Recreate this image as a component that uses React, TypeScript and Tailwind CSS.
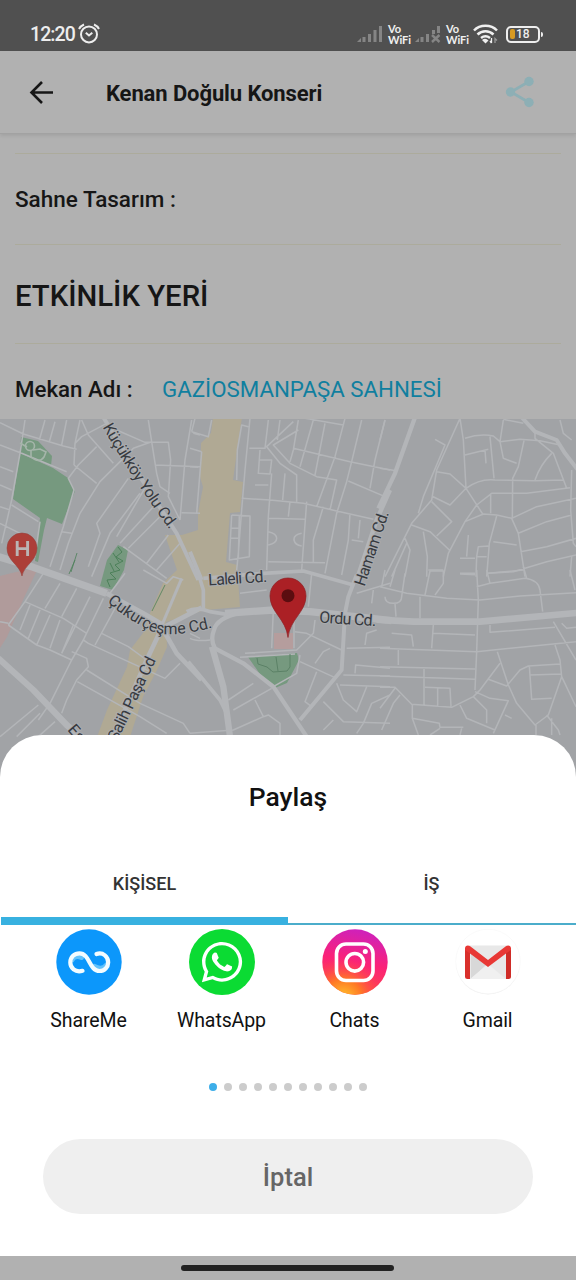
import React from "react";
import { FaWhatsapp } from "react-icons/fa";

type Tile = { x: number; y: number; thin: string; wide: { d: string; w: number }[] };

// Street geometry, grouped by map tile; tile units are a third of a pixel.
const tiles: Tile[] = [
  {
    x: 0, y: 410,
    thin: "M0 38L70 72L190 108L230 118M0 105L65 130L200 185M75 30L60 130L35 270L5 400M135 30L118 90M165 35L148 95M200 30L185 105M240 30L225 100L222 165M225 100L245 80L320 40M245 30L265 75L340 160M222 165L290 220M290 110L235 165L205 205L222 240L190 350L150 470M455 95L400 115L300 215L240 310L205 400L180 480M350 60L435 97L505 97L512 150L505 260L540 330M445 30L455 95L470 190L480 230L510 250M465 165L600 170M575 30L555 150L540 330M600 310L545 308M580 70L600 75M385 205L290 340L300 370L265 470M440 225L350 380M465 285L360 400M490 310L385 415M420 250L330 370L275 500M0 170L40 185M0 225L35 240M35 285L115 335M0 290L30 300M120 335L105 440M0 340L60 370M185 365L215 370M505 375L440 460M540 400L470 480M370 410L500 505",
    wide: [{ d: "M310 22L420 200L530 370L595 510", w: 12 }],
  },
  {
    x: 190, y: 410,
    thin: "M180 25L165 180L155 300L145 430L140 480M0 115L35 125M0 170L25 172M35 125L20 310M5 65L55 80L65 30M5 65L15 25M140 210L142 120L155 45L175 50M235 30L225 115L178 115M310 35L230 110L270 160L320 195L320 275M325 60L250 105L300 160L380 200L440 210L420 300M270 30L262 90M325 30L310 120L300 155M370 30L330 170M405 40L375 195M345 25L460 45M310 115L480 155L600 180M350 275L335 480M465 25L435 140L380 290M515 30L485 155L470 215L440 310L405 490M585 30L555 150L540 235M155 265L240 270L340 280L450 305L550 328M475 213L585 260M400 290L370 390L370 455M210 120L205 190L240 192L245 150L210 150M245 190L235 320L230 480M285 190L278 270M195 225L235 225M235 325L345 328M300 275L295 320M235 455L405 458M235 365Q260 370 260 385Q260 400 235 405M335 370Q310 375 312 390Q315 405 335 408M125 315L180 318L178 440L118 450L125 315M122 355L150 355M120 385L148 385M148 318L145 445M480 310L475 390L455 495M510 330L505 385M485 390L520 395",
    wide: [{ d: "M600 240L560 330L500 510", w: 13 }, { d: "M0 425L35 510", w: 12 }],
  },
  {
    x: 380, y: 410,
    thin: "M15 30L0 90M0 175L50 182M240 25L170 180L155 270L95 340L15 500M165 88L195 105L130 260L115 310M240 25L250 90L258 235L310 315M255 85Q300 70 340 78L360 95L420 88L480 92L540 105M255 135L325 118M315 120L318 160M330 80L342 205M370 30L360 95L370 145L410 160M370 28L430 40M432 92L415 170L398 205L397 325M258 235Q300 205 345 210L465 212L550 210M465 210Q480 165 515 130M465 65L465 85L520 130L560 235M170 185L210 192L258 235L210 285L155 258M155 275L215 335L170 378M95 345L150 365L208 420M130 365L142 440L140 500M570 233L440 250L335 250L290 285L255 335L205 430L190 500M332 250L332 310M255 335L310 312L350 315L395 325L470 290L588 265M350 318L328 400L320 500M395 325L415 370L435 500M415 370L500 335L575 315M422 425L500 410L588 385M322 490L400 485L500 455L588 435M288 500L290 440L295 410L325 408M290 440L320 440M265 375L260 440M240 445L285 445M240 490L285 490M340 395L410 405M575 180L572 300L580 400L588 410M575 440L570 500M540 30L550 70L575 90M75 385L90 420L75 500M80 400L35 500M145 480L190 480",
    wide: [{ d: "M105 22L45 190L-5 295", w: 13 }, { d: "M425 22L465 65L530 90L555 130L592 178", w: 12 }],
  },
  {
    x: 0, y: 570,
    thin: "M130 10L75 95L25 165M75 95L190 145L260 190M25 165L110 225L150 240L215 270M180 40L135 115M230 55L185 140M90 105L60 180M120 120L85 205M150 135L110 225M180 150L150 235M220 165L185 250M270 80L185 250M310 85L250 210L215 270L150 400L115 450M250 210L265 220L495 325L540 280M215 245L260 265L265 290L230 330L200 390L185 430M260 300L420 400L550 460L570 490M232 335L420 440L500 490M305 190L385 230L440 270M345 115L285 225M330 70L375 10M430 0L500 40L520 20L550 30M0 500L115 405M50 500L120 430M115 500L165 455M0 155L25 160M570 190L600 205",
    wide: [
      { d: "M-5 -40L100 -8L320 70", w: 22 }, { d: "M320 70L430 130L490 165", w: 14 },
      { d: "M545 25L488 160", w: 9 }, { d: "M605 113L485 175L440 270L340 500", w: 14 },
      { d: "M490 180L530 250L605 330", w: 14 }, { d: "M-5 265L100 360L200 465L240 500", w: 19 },
    ],
  },
  {
    x: 190, y: 570,
    thin: "M365 10L355 110M250 120L245 235M312 130L312 235M165 250L320 240L370 190L375 150M150 262L315 252M315 185L350 190L455 240M330 255L320 310L250 350M330 275L440 325M380 305L345 395L365 410M375 280L400 245L420 235M440 340L460 390L500 425L530 350M400 395L460 455L600 460M400 480L430 450M600 375L545 400L520 460L500 490M115 390L190 340M130 420L245 355M195 390L220 440L130 480L0 490M220 440L235 435L270 460L270 495M495 310L497 285L600 295M460 315L600 318M450 345L600 350M470 235L600 232M500 70L600 40M550 60L545 100M525 225L530 190L560 180M0 205Q20 215 60 210M150 70L230 60",
    wide: [
      { d: "M20 -5L40 60L40 115", w: 11 }, { d: "M-10 125Q20 108 60 125L110 133", w: 11 },
      { d: "M105 130L250 120L360 125L605 152", w: 22 },
      { d: "M150 128Q80 145 72 180Q60 210 75 235L160 280L250 350L350 500", w: 13 },
      { d: "M66 230L100 350L120 500", w: 19 }, { d: "M-5 275L90 390L110 430", w: 11 },
      { d: "M40 25L220 10L340 3L490 45", w: 11 }, { d: "M500 15L475 80L465 130L455 300L330 450", w: 12 },
    ],
  },
  {
    x: 380, y: 570,
    thin: "M0 50L80 70L200 85L300 90L420 78L588 68M290 0L295 90L290 245L285 360M120 80L120 145M45 100L48 140M15 80Q15 100 40 100Q65 100 65 80L75 10M5 50L15 0M30 50L45 0M135 75L150 3L190 3L190 40L165 75M320 0L330 40L290 50M330 40L435 25Q475 30 480 60L488 125M430 -10L440 25M240 12L285 14M325 10L430 0M570 0L585 60M160 165L155 235M160 190L285 195M35 190L95 195L100 230M330 165L330 187L525 172M0 235L290 245L588 215M55 240L55 285M520 155L588 270M545 160L560 175L588 172M0 290L285 297M0 318L285 328M132 292L132 405M0 352L45 352L95 403L215 412L280 380L300 360L360 280M135 352L210 355L213 410M173 355L173 410M0 415L45 355M5 480L40 400L60 375M352 245L385 345L410 400L465 465L505 435L545 320L540 270L525 225M325 328L380 348L420 300L445 288L540 282M448 288L455 388L515 385M450 315L545 312M545 320L588 410M285 365L330 385L385 392L340 490M280 380L320 420L320 460M240 405L260 445L345 480M375 435L395 445M97 405L97 445L178 460L180 472L250 472M115 495L97 445M150 495L180 475M245 475L240 495M500 435L535 480L540 495M515 445L515 495M468 465L468 495",
    wide: [{ d: "M-10 149L100 155L300 155L600 128", w: 20 }],
  },
];

const labels = [
  { id: "kucukkoy", d: "M102.500 427Q132 479 175 537", t: "Küçükköy Yolu Cd.", l: 123 },
  { id: "hamam", d: "M364.5 587L390 510", t: "Hamam Cd.", l: 78 },
  { id: "laleli", d: "M208.500 585.5L280 581", t: "Laleli Cd.", l: 59 },
  { id: "ordu", d: "M319 622.5L390 627", t: "Ordu Cd.", l: 57 },
  { id: "cukurcesme", d: "M107 602Q128 620 151 631Q173 640 225 624", t: "Çukurçeşme Cd.", l: 116 },
  { id: "salih", d: "M117 742L160 652", t: "Salih Paşa Cd", l: 91 },
  { id: "eski", d: "M67 730L100 768", t: "Eski", l: 30 },
];

function StreetMap() {
  return (
    <svg className="block h-[361px] w-full shrink-0" viewBox="0 419 576 361">
      <rect x="0" y="419" width="576" height="361" fill="#a1a3a6" />
      <path d="M213 418L242 418L240 430L233 480L243 482L240 512L230 513L226 562L237 565L240 607L205 610L166 622L167 647L157 670L143 697L130 737L97 737L107 710L127 667L130 650L143 633L150 613L163 583L177 570L165 535L182 535L198 530L198 513L203 487L200 477L201 443L211 433Z" fill="#b0a994" />
      <path d="M0 576L16 572L38 568L23 600L7 637L0 648Z" fill="#b09b9b" />
      <path d="M274 633H293V649H274Z" fill="#b59d9d" />
      <g fill="#76997f">
        <path d="M20 453L53 468L68 478L75 491L62 524L47 518L44 530L38 562L35 561L40 518L13 499Z" />
        <path d="M21 437L38 441L52 456L51 466L20 453Z" />
        <path d="M248 657L297 653L299 660L287 683L275 688L262 677Z" />
      </g>
      <path d="M118 545L128 550L124 570L113 590L100 586L107 560Z" fill="#76997f" />
      {tiles.map((tile) => (
        <g key={`${tile.x}-${tile.y}`} transform={`translate(${tile.x} ${tile.y}) scale(.33333)`} fill="none" stroke="#b3b5b8" strokeLinejoin="round">
          <path d={tile.thin} strokeWidth="4.6" />
          {tile.wide.map((road) => <path key={road.d} d={road.d} strokeWidth={road.w} />)}
        </g>
      ))}
      <g fill="none" stroke="#4c8059" strokeWidth="1">
        <path d="M118 547L122 552L116 557L123 561L115 565L120 570L110 573L116 579L107 580L110 587M113 553L119 562M110 563L114 571" />
        <path d="M257 658L258 664L267 667L273 672L287 671L290 667V654M276 657L278 671" stroke="#5b8166" />
        <path d="M77 553L71 572M165 585L152 611M75 560L69 574" strokeWidth=".8" />
      </g>
      <g fill="none" stroke="#a5b5aa" strokeWidth="1.6">
        <circle cx="30" cy="446" r="4.5" />
        <path d="M20 443L27 447M31 451L31 457Q39 464 44 457L46 452L40 449L33 450" />
      </g>
      <path d="M0 666L36 700" stroke="#a2a4a7" strokeWidth="1" />
      <g fontFamily="Roboto, sans-serif" fontSize="16" fill="#373a3f" stroke="#aaacaf" strokeWidth="2" paintOrder="stroke">
        {labels.map((label) => (
          <React.Fragment key={label.id}>
            <path id={label.id} d={label.d} fill="none" stroke="none" />
            <text textLength={label.l}><textPath href={`#${label.id}`} textLength={label.l}>{label.t}</textPath></text>
          </React.Fragment>
        ))}
      </g>
      <path d="M22 576C20 565 7 561 7 548A15 15 0 0 1 37 548C37 561 24 565 22 576Z" fill="#ac3f38" stroke="#95413c" strokeWidth=".6" />
      <path d="M17.2 541V556M27.6 541V556M17.2 548.6H27.6" stroke="#bab5b4" strokeWidth="2.9" />
      <path d="M288 637.5C286 619 270 612 270 596A18 18 0 0 1 306 596C306 612 290 619 288 637.5Z" fill="#ab2025" stroke="#8e2024" strokeWidth=".7" />
      <circle cx="288" cy="595.7" r="6.5" fill="#5b0d10" />
    </svg>
  );
}

function Signal({ off = false }: { off?: boolean }) {
  return (
    <svg className="h-[17px] w-[26px]" viewBox="0 0 26 17" fill="#858585">
      <path d="M0 16L4 12V16ZM5.5 11H8.5V16H5.5ZM11 8H14V16H11Z" />
      {off ? (
        <>
          <path d="M17 4H20V8H17ZM22 0H25V7H22Z" />
          <path d="M17 9L24.5 16M24.5 9L17 16" stroke="#858585" strokeWidth="2.4" />
        </>
      ) : (
        <path d="M16.5 4H19.5V16H16.5ZM22 0H25V16H22Z" />
      )}
    </svg>
  );
}

function VoWifi() {
  return (
    <div className="flex w-[23px] flex-col font-[Lato,sans-serif] text-[11px] leading-[11px] font-bold tracking-[-0.1px] text-[#f0f0f0]">
      <span>Vo</span>
      <span>WiFi</span>
    </div>
  );
}

function StatusBar() {
  return (
    <div className="flex h-[51px] shrink-0 items-start justify-between bg-[#505050] pr-[33px] pl-[30px]">
      <div className="flex pt-[23px]">
        <span className="w-[48px] text-[19.5px] leading-[23px] font-medium tracking-[-0.9px] whitespace-nowrap text-[#ededed]">12:20</span>
        <svg className="h-[21px] w-[22px]" viewBox="0 0 22 21" fill="none" stroke="#ededed" strokeWidth="2">
          <circle cx="11" cy="11.4" r="8" />
          <path d="M1 6Q2.5 3 6 1.5M21 6Q19.500 3 16 1.500" />
          <path d="M7.800 9.800L11 12.500L14.300 9.800" />
        </svg>
      </div>
      <div className="flex items-center pt-[23px]">
        <Signal />
        <div className="w-[5px]" />
        <VoWifi />
        <div className="w-[4px]" />
        <Signal off />
        <div className="w-[5px]" />
        <VoWifi />
        <svg className="ml-[4px] h-[20px] w-[25px]" viewBox="0 0 25 20" fill="none" stroke="#f0f0f0" strokeWidth="2.500">
          <path d="M1 6.500C7 .3 18 .3 24 6.500M4.500 10.500C9 6 16 6 20.500 10.500M8 14Q12.500 10.500 17 14" />
          <path d="M9 16L12.500 19.500L15.500 16.500Q12.500 13.500 9 16Z" fill="#f0f0f0" stroke="none" />
          <path d="M18.500 14V19M17 17L18.500 19" strokeWidth="1.300" />
          <path d="M22 19V14.500L24 16.500" stroke="#999" strokeWidth="1.300" />
        </svg>
        <div className="ml-[8px] flex h-[17px] w-[34px] items-center rounded-[5px] border-2 border-[#eeeeee] pl-[2px]">
          <div className="h-[10px] w-[5px] rounded-[2px] bg-[#d79b22]" />
          <span className="ml-[1px] text-[12px] leading-none font-medium text-[#eeeeee]">18</span>
        </div>
        <div className="ml-px h-[5px] w-[2px] rounded-r bg-[#eeeeee]" />
      </div>
    </div>
  );
}

function ShareMeIcon() {
  return (
    <svg className="size-[66px]" viewBox="0 0 66 66">
      <circle cx="33" cy="33" r="32.700" fill="#0c97fb" />
      <g fill="none" strokeLinecap="round" strokeWidth="4.200">
        <path d="M16 31Q18.500 25.500 25.500 28.500M50.500 36Q46 42 38.500 37.500" stroke="#62c2fb" strokeWidth="5" />
        <path d="M26.500 41.800C19 44 14.300 38.500 14.300 33.500C14.300 28 18.500 24.300 23.500 24.300C34 24.300 33 42 43.500 42C48.500 42 52.200 38 52.200 33.500C52.200 28 47 22.500 40.500 25" stroke="#f4fcff" />
      </g>
    </svg>
  );
}

function WhatsAppIcon() {
  return (
    <div className="flex size-[66px] items-center justify-center rounded-full bg-[#0bdb33]">
      <FaWhatsapp className="size-[46px] text-white" />
    </div>
  );
}

function InstagramIcon() {
  return (
    <svg className="size-[66px]" viewBox="0 0 66 66">
      <defs>
        <linearGradient id="insta-base" x1=".6" y1="0" x2=".4" y2="1">
          <stop offset="0" stopColor="#cd21bd" />
          <stop offset=".5" stopColor="#fb2277" />
          <stop offset="1" stopColor="#fe4a45" />
        </linearGradient>
        <radialGradient id="insta-glow" cx=".32" cy="1.050" r=".62">
          <stop offset="0" stopColor="#ffc62c" />
          <stop offset=".45" stopColor="#ff7a25" />
          <stop offset="1" stopColor="#ff3a55" stopOpacity="0" />
        </radialGradient>
      </defs>
      <circle cx="33" cy="33" r="32.700" fill="url(#insta-base)" />
      <circle cx="33" cy="33" r="32.700" fill="url(#insta-glow)" />
      <g fill="none" stroke="#fff" strokeWidth="3.600">
        <rect x="14.500" y="15" width="36.500" height="36.500" rx="9.500" />
        <circle cx="32.800" cy="33.300" r="8.800" />
      </g>
      <circle cx="43.300" cy="22.500" r="2.500" fill="#fff" />
    </svg>
  );
}

function GmailIcon() {
  return (
    <svg className="size-[66px]" viewBox="0 0 66 66">
      <circle cx="33" cy="33.500" r="32" fill="#eeeeee" />
      <circle cx="33" cy="32.500" r="32.300" fill="#fff" stroke="#f7f7f7" strokeWidth=".6" />
      <path d="M14 16.500H52V50H14Z" fill="#e8e8e8" />
      <path d="M15 21L31 36L16 50V23Z" fill="#d8d8d8" />
      <path d="M15 50L33 35L51 50Z" fill="#f0f0f0" />
      <path d="M10 19L15 23V50H12.500Q10 50 10 47.500Z" fill="#d9302c" />
      <path d="M56 19L51 23V50H53.500Q56 50 56 47.500Z" fill="#cf2c27" />
      <path d="M10 21V19.500C10 16.500 13 15.500 15.500 17.500L33 31L50.500 17.500C53 15.500 56 16.500 56 19.500V21L51 24.500L33 38L15 24.500Z" fill="#e83835" />
    </svg>
  );
}

const apps = [
  { name: "ShareMe", icon: <ShareMeIcon /> },
  { name: "WhatsApp", icon: <WhatsAppIcon /> },
  { name: "Chats", icon: <InstagramIcon /> },
  { name: "Gmail", icon: <GmailIcon /> },
];

function ShareSheet() {
  return (
    <section className="relative -mt-[45px] flex h-[521px] shrink-0 flex-col rounded-t-[42px] bg-white">
      <h2 className="pt-[46px] text-center text-[26.5px] leading-[32px] font-medium text-[#111111]">Paylaş</h2>
      <div className="mt-[38px] grid h-[74px] grid-cols-2 text-center text-[18px] leading-[66px] font-medium text-[#333333]">
        <div className="ml-px border-b-8 border-[#38b1e0]">KİŞİSEL</div>
        <div className="border-b-2 border-[#4badcb] pr-px">İŞ</div>
      </div>
      <div className="mt-1 grid grid-cols-4 px-[22px]">
        {apps.map((app) => (
          <div key={app.name} className="flex flex-col items-center">
            {app.icon}
            <span className="mt-[14px] text-[19.5px] leading-6 tracking-[-0.1px] text-[#111111]">{app.name}</span>
          </div>
        ))}
      </div>
      <div className="mt-[50px] flex justify-center gap-[7px]">
        {Array.from({ length: 11 }, (_, i) => (
          <div key={i} className={i === 0 ? "size-2 rounded-full bg-[#3daee9]" : "size-2 rounded-full bg-[#cccccc]"} />
        ))}
      </div>
      <button className="mt-[48px] ml-[43px] h-[75px] w-[490px] rounded-full bg-[#efefef] pt-[2px] text-[25.5px] font-medium text-[#666666]">İptal</button>
    </section>
  );
}

export default function App() {
  return (
    <div className="flex h-[1280px] w-[576px] flex-col overflow-hidden bg-[#b1b1b1] font-[Roboto,sans-serif] text-[#161616]">
      <StatusBar />
      <header className="flex h-[83px] shrink-0 items-center border-b border-[#a2a2a2] shadow-[0_2px_3px_rgba(0,0,0,0.08)]">
        <svg className="ml-[29px] h-[24px] w-[25px]" viewBox="0 0 25 24" fill="none" stroke="#161616" strokeWidth="2.600">
          <path d="M24 12.500H3M13 2L2.500 12.500L13 23" />
        </svg>
        <h1 className="ml-[52px] flex-1 pt-[3px] text-[22px] leading-7 font-bold tracking-[-0.1px]">Kenan Doğulu Konseri</h1>
        <svg className="mr-[41px] h-[32px] w-[30px]" viewBox="0 0 30 32" fill="#8dafb5">
          <path d="M24 5.500L6 16L24 26.500" fill="none" stroke="#8dafb5" strokeWidth="2.800" />
          <circle cx="24" cy="5.500" r="4.700" />
          <circle cx="5.500" cy="16" r="4.700" />
          <circle cx="24" cy="26.500" r="4.700" />
        </svg>
      </header>
      <main className="flex h-[285px] shrink-0 flex-col px-[15px] pt-[19px]">
        <div className="flex h-[91px] items-center border-t border-[#acab9c] pt-[2px] text-[22.5px] font-medium">Sahne Tasarım :</div>
        <div className="flex h-[99px] items-center border-t border-[#acab9c] pt-[5px] text-[29.3px] font-medium">ETKİNLİK YERİ</div>
        <div className="flex h-[76px] items-center border-t border-[#acab9c] pt-[17px] text-[22.3px]">
          <span className="w-[147px] font-medium">Mekan Adı :</span>
          <span className="text-[#107f9f]">GAZİOSMANPAŞA SAHNESİ</span>
        </div>
      </main>
      <StreetMap />
      <ShareSheet />
      <div className="flex h-6 shrink-0 items-center justify-center pr-px">
        <div className="h-[6px] w-[213px] rounded-full bg-[#222222]" />
      </div>
    </div>
  );
}
